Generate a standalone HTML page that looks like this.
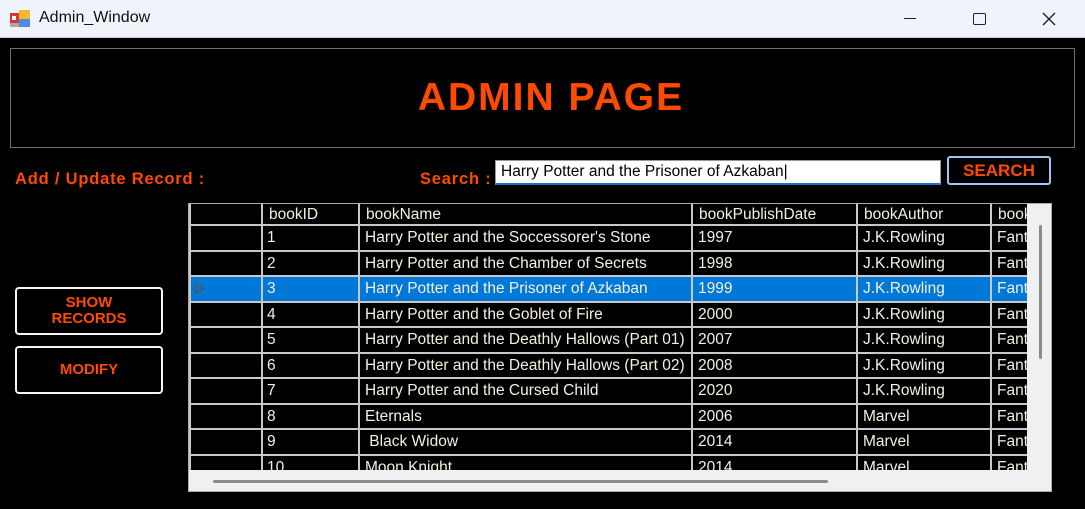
<!DOCTYPE html>
<html><head><meta charset="utf-8"><style>
*{margin:0;padding:0;box-sizing:border-box}
body{width:1085px;height:509px;overflow:hidden;background:#000;font-family:"Liberation Sans",sans-serif;position:relative}
.a{position:absolute}
.tb{left:0;top:0;width:1085px;height:38px;background:#eff3fa;border-bottom:1px solid #c8ccd2}
.or{color:#ff4a00;font-weight:bold}
.cell{position:absolute;color:#f4f0e0;font-size:15.5px;white-space:nowrap;overflow:hidden;padding-left:5px;line-height:25px}
.hl{position:absolute;background:#c8c8c8}
.btn{position:absolute;border:2px solid #f4f4f4;border-radius:4px;color:#ff4a00;font-weight:bold;font-size:15px;text-align:center;line-height:16px;display:flex;align-items:center;justify-content:center}
</style></head><body>
<div class="a tb"></div>
<svg class="a" style="left:10px;top:9px" width="21" height="19" viewBox="0 0 21 19"><rect x="0" y="4" width="9" height="10" fill="#d33"/><rect x="2" y="7" width="4" height="4" fill="#fff"/><rect x="9" y="1" width="11" height="9" fill="#f2b92e"/><rect x="9" y="10" width="11" height="8" fill="#4a8ee0"/><rect x="0" y="14" width="9" height="4" fill="#aaa"/></svg>
<div class="a" style="left:39px;top:9px;font-size:16px;color:#111">Admin_Window</div>
<div class="a" style="left:904px;top:18px;width:12px;height:1px;background:#222"></div>
<div class="a" style="left:973px;top:13px;width:13px;height:12px;border:1.5px solid #222;border-radius:2px"></div>
<svg class="a" style="left:1042px;top:12px" width="14" height="14"><path d="M1 1L13 13M13 1L1 13" stroke="#222" stroke-width="1.4"/></svg>

<div class="a" style="left:10px;top:48px;width:1065px;height:100px;border:1px solid #6e6e6e"></div>
<div class="a or" style="left:10px;top:76px;width:1082px;text-align:center;font-size:39px;letter-spacing:2px">ADMIN PAGE</div>

<div class="a or" style="left:15px;top:170px;font-size:16.5px;letter-spacing:0.8px">Add / Update Record :</div>
<div class="a or" style="left:420px;top:170px;font-size:16.5px;letter-spacing:0.8px">Search :</div>
<div class="a" style="left:495px;top:160px;width:446px;height:25px;background:#fff;border:1px solid #999;border-bottom:2px solid #1a6fd0;font-size:15.5px;line-height:22px;padding-left:5px;color:#000">Harry Potter and the Prisoner of Azkaban|</div>
<div class="a or" style="left:947px;top:156px;width:104px;height:29px;border:2px solid #9cc8f2;border-radius:3px;font-size:17px;text-align:center;line-height:25px">SEARCH</div>

<div class="btn" style="left:15px;top:287px;width:148px;height:48px">SHOW<br>RECORDS</div>
<div class="btn" style="left:15px;top:346px;width:148px;height:48px">MODIFY</div>

<div class="a" style="left:188px;top:203px;width:864px;height:289px;background:#f0f0f0;border:1px solid #aaa"></div>
<div class="a" style="left:189px;top:204px;width:838px;height:266px;background:#000;overflow:hidden">
<div class="a" style="left:0;top:72px;width:838px;height:25px;background:#0078d7"></div>
<svg class="a" style="left:5px;top:78px" width="11" height="13"><path d="M1.5 1.5L9 6.5L1.5 11.5Z" fill="none" stroke="#555" stroke-width="1.6"/></svg>
<div class="hl" style="left:0;top:0;width:2px;height:266px"></div>
<div class="hl" style="left:72px;top:0;width:2px;height:266px"></div>
<div class="hl" style="left:169px;top:0;width:2px;height:266px"></div>
<div class="hl" style="left:502px;top:0;width:2px;height:266px"></div>
<div class="hl" style="left:667px;top:0;width:2px;height:266px"></div>
<div class="hl" style="left:801px;top:0;width:2px;height:266px"></div>
<div class="hl" style="left:0;top:20px;width:838px;height:2px"></div>
<div class="hl" style="left:0;top:45.5px;width:838px;height:2px"></div>
<div class="hl" style="left:0;top:71px;width:838px;height:2px"></div>
<div class="hl" style="left:0;top:96.5px;width:838px;height:2px"></div>
<div class="hl" style="left:0;top:122px;width:838px;height:2px"></div>
<div class="hl" style="left:0;top:147.5px;width:838px;height:2px"></div>
<div class="hl" style="left:0;top:173px;width:838px;height:2px"></div>
<div class="hl" style="left:0;top:198.5px;width:838px;height:2px"></div>
<div class="hl" style="left:0;top:224px;width:838px;height:2px"></div>
<div class="hl" style="left:0;top:249.5px;width:838px;height:2px"></div>
</div>
<div class="a" style="left:189px;top:204px;width:838px;height:266px;overflow:hidden">
<div class="cell" style="left:75px;top:-2px">bookID</div>
<div class="cell" style="left:172px;top:-2px">bookName</div>
<div class="cell" style="left:505px;top:-2px">bookPublishDate</div>
<div class="cell" style="left:670px;top:-2px">bookAuthor</div>
<div class="cell" style="left:804px;top:-2px">bookCategory</div>
</div>
<div class="a" style="left:189px;top:225px;width:838px;height:245px;overflow:hidden">
<div class="a" style="left:0;top:0">
<div class="cell" style="left:73px;top:0">1</div><div class="cell" style="left:171px;top:0">Harry Potter and the Soccessorer's Stone</div><div class="cell" style="left:504px;top:0">1997</div><div class="cell" style="left:669px;top:0">J.K.Rowling</div><div class="cell" style="left:803px;top:0;width:35px">Fantasy</div>
<div class="cell" style="left:73px;top:25.5px">2</div><div class="cell" style="left:171px;top:25.5px">Harry Potter and the Chamber of Secrets</div><div class="cell" style="left:504px;top:25.5px">1998</div><div class="cell" style="left:669px;top:25.5px">J.K.Rowling</div><div class="cell" style="left:803px;top:25.5px;width:35px">Fantasy</div>
<div class="cell" style="left:73px;top:51px">3</div><div class="cell" style="left:171px;top:51px">Harry Potter and the Prisoner of Azkaban</div><div class="cell" style="left:504px;top:51px">1999</div><div class="cell" style="left:669px;top:51px">J.K.Rowling</div><div class="cell" style="left:803px;top:51px;width:35px">Fantasy</div>
<div class="cell" style="left:73px;top:76.5px">4</div><div class="cell" style="left:171px;top:76.5px">Harry Potter and the Goblet of Fire</div><div class="cell" style="left:504px;top:76.5px">2000</div><div class="cell" style="left:669px;top:76.5px">J.K.Rowling</div><div class="cell" style="left:803px;top:76.5px;width:35px">Fantasy</div>
<div class="cell" style="left:73px;top:102px">5</div><div class="cell" style="left:171px;top:102px">Harry Potter and the Deathly Hallows (Part 01)</div><div class="cell" style="left:504px;top:102px">2007</div><div class="cell" style="left:669px;top:102px">J.K.Rowling</div><div class="cell" style="left:803px;top:102px;width:35px">Fantasy</div>
<div class="cell" style="left:73px;top:127.5px">6</div><div class="cell" style="left:171px;top:127.5px">Harry Potter and the Deathly Hallows (Part 02)</div><div class="cell" style="left:504px;top:127.5px">2008</div><div class="cell" style="left:669px;top:127.5px">J.K.Rowling</div><div class="cell" style="left:803px;top:127.5px;width:35px">Fantasy</div>
<div class="cell" style="left:73px;top:153px">7</div><div class="cell" style="left:171px;top:153px">Harry Potter and the Cursed Child</div><div class="cell" style="left:504px;top:153px">2020</div><div class="cell" style="left:669px;top:153px">J.K.Rowling</div><div class="cell" style="left:803px;top:153px;width:35px">Fantasy</div>
<div class="cell" style="left:73px;top:178.5px">8</div><div class="cell" style="left:171px;top:178.5px">Eternals</div><div class="cell" style="left:504px;top:178.5px">2006</div><div class="cell" style="left:669px;top:178.5px">Marvel</div><div class="cell" style="left:803px;top:178.5px;width:35px">Fantasy</div>
<div class="cell" style="left:73px;top:204px">9</div><div class="cell" style="left:171px;top:204px">&nbsp;Black Widow</div><div class="cell" style="left:504px;top:204px">2014</div><div class="cell" style="left:669px;top:204px">Marvel</div><div class="cell" style="left:803px;top:204px;width:35px">Fantasy</div>
<div class="cell" style="left:73px;top:229.5px">10</div><div class="cell" style="left:171px;top:229.5px">Moon Knight</div><div class="cell" style="left:504px;top:229.5px">2014</div><div class="cell" style="left:669px;top:229.5px">Marvel</div><div class="cell" style="left:803px;top:229.5px;width:35px">Fantasy</div>
</div></div>
<div class="a" style="left:1039px;top:225px;width:3px;height:134px;background:#8a8a8a;border-radius:2px"></div>
<div class="a" style="left:213px;top:480px;width:615px;height:3px;background:#8a8a8a;border-radius:2px"></div>
</body></html>
